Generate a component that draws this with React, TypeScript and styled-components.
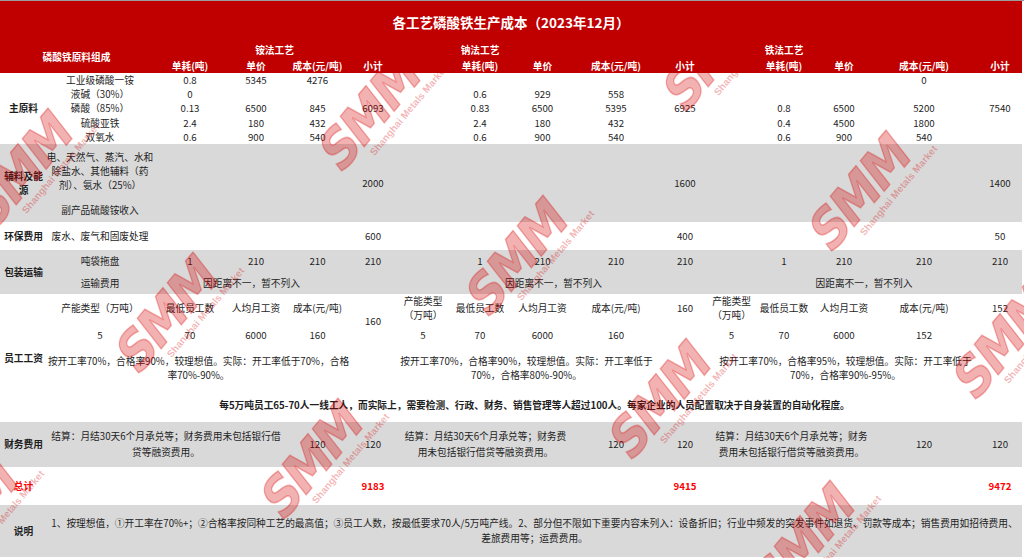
import React from "react";
import styled, { createGlobalStyle } from "styled-components";

const COLS =
  "47px 106px 74px 58px 65px 46px 54px 60px 65px 82px 56px 37px 68px 52px 108px 44px";

const GlobalStyle = createGlobalStyle`
  html, body {
    margin: 0;
    padding: 0;
    background: #fff;
  }
  body {
    font-family: "Noto Sans CJK SC", "Noto Sans", sans-serif;
    font-size: 9.7px;
    color: #1e1e1e;
  }
`;

const Sheet = styled.div`
  position: relative;
  width: 1024px;
  height: 558px;
  overflow: hidden;
  border-top: 1px solid #9a9a9a;
  box-sizing: border-box;
`;

const Section = styled.div<{ $rows: string; $tone?: "red" | "gray" | "white" }>`
  display: grid;
  width: 1022px;
  grid-template-columns: ${COLS};
  grid-template-rows: ${(p) => p.$rows};
  background: ${(p) =>
    p.$tone === "red" ? "#c00000" : p.$tone === "gray" ? "#d9d9d9" : "#ffffff"};
`;

const Header = styled(Section)`
  position: relative;
  z-index: 2;
  color: #fff;
  font-weight: 700;
`;

const Cell = styled.div<{ $col: string; $row: string; $bold?: boolean; $red?: boolean }>`
  grid-column: ${(p) => p.$col};
  grid-row: ${(p) => p.$row};
  display: flex;
  align-items: center;
  justify-content: center;
  text-align: center;
  white-space: nowrap;
  line-height: 14px;
  font-weight: ${(p) => (p.$bold ? 700 : "inherit")};
  color: ${(p) => (p.$red ? "#ff0000" : "inherit")};
`;

const Title = styled(Cell)`
  font-size: 13.5px;
  padding-top: 1px;
`;

const Para = styled(Cell)<{ $lh?: number }>`
  line-height: ${(p) => p.$lh ?? 14}px;
`;

const Mark = styled.div`
  position: absolute;
  z-index: 1;
  pointer-events: none;
  user-select: none;
  display: flex;
  flex-direction: column;
  align-items: flex-end;
  transform: translate(-50%, -50%) rotate(-50deg);
  color: rgba(215, 0, 0, 0.3);
  font-family: "DejaVu Sans", "Liberation Sans", sans-serif;
  font-weight: 700;
`;

const MarkLogo = styled.span`
  font-size: 52px;
  line-height: 46px;
  letter-spacing: -3px;
  transform: skewX(-12deg) scaleX(0.95);
  -webkit-text-stroke: 1.5px rgba(215, 0, 0, 0.3);
  margin-right: 14px;
`;

const MarkSub = styled.span`
  font-family: "Liberation Sans", sans-serif;
  font-size: 10px;
  line-height: 11px;
  margin-right: -4px;
`;

const materials = [
  { name: "工业级磷酸一铵", a: ["0.8", "5345", "4276"], n: ["", "", ""], f: ["", "", "0"] },
  { name: "液碱（30%）", a: ["0", "", ""], n: ["0.6", "929", "558"], f: ["", "", ""] },
  { name: "磷酸（85%）", a: ["0.13", "6500", "845"], n: ["0.83", "6500", "5395"], f: ["0.8", "6500", "5200"] },
  { name: "硫酸亚铁", a: ["2.4", "180", "432"], n: ["2.4", "180", "432"], f: ["0.4", "4500", "1800"] },
  { name: "双氧水", a: ["0.6", "900", "540"], n: ["0.6", "900", "540"], f: ["0.6", "900", "540"] },
];

// first column of each process block (name column)
const blocks = [
  { start: 2, key: "a" as const, sub: "6093", staff: "160", total: "9183" },
  { start: 7, key: "n" as const, sub: "6925", staff: "160", total: "9415" },
  { start: 12, key: "f" as const, sub: "7540", staff: "152", total: "9472" },
];

const marks = [
  [30, 168], [378, 110], [722, 50], [175, 312], [525, 255], [868, 190],
  [320, 458], [668, 398], [1012, 338], [812, 540], [-25, 515],
];

const c = (n: number) => String(n);

export default function App() {
  return (
    <>
      <GlobalStyle />
      <Sheet>
        <Header $tone="red" $rows="40px 18px 14px">
          <Title $col="1 / -1" $row="1">各工艺磷酸铁生产成本（2023年12月）</Title>
          <Cell $col="1 / 3" $row="2 / 4">磷酸铁原料组成</Cell>
          <Cell $col="3 / 7" $row="2">铵法工艺</Cell>
          <Cell $col="8" $row="2">钠法工艺</Cell>
          <Cell $col="13" $row="2">铁法工艺</Cell>
          {blocks.map((b) => (
            <React.Fragment key={b.start}>
              <Cell $col={c(b.start + 1)} $row="3">单耗(吨)</Cell>
              <Cell $col={c(b.start + 2)} $row="3">单价</Cell>
              <Cell $col={c(b.start + 3)} $row="3">成本(元/吨)</Cell>
              <Cell $col={c(b.start + 4)} $row="3">小计</Cell>
            </React.Fragment>
          ))}
        </Header>

        {/* 主原料 */}
        <Section $rows="repeat(5, 14.2px)">
          <Cell $col="1" $row="1 / 6" $bold>主原料</Cell>
          {materials.map((m, i) => (
            <React.Fragment key={m.name}>
              <Cell $col="2" $row={c(i + 1)}>{m.name}</Cell>
              {blocks.map((b) =>
                m[b.key].map((v, j) => (
                  <Cell key={b.key + j} $col={c(b.start + 1 + j)} $row={c(i + 1)}>
                    {v}
                  </Cell>
                ))
              )}
            </React.Fragment>
          ))}
          {blocks.map((b) => (
            <Cell key={b.start} $col={c(b.start + 4)} $row="3">{b.sub}</Cell>
          ))}
        </Section>

        {/* 辅料及能源 */}
        <Section $tone="gray" $rows="54px 24px">
          <Cell $col="1" $row="1 / 3" $bold>
            辅料及能
            <br />源
          </Cell>
          <Cell $col="2" $row="1">
            电、天然气、蒸汽、水和
            <br />
            除盐水、其他辅料（药
            <br />
            剂）、氨水（25%）
          </Cell>
          <Cell $col="2" $row="2">副产品硫酸铵收入</Cell>
          <Cell $col="6" $row="1 / 3">2000</Cell>
          <Cell $col="11" $row="1 / 3">1600</Cell>
          <Cell $col="16" $row="1 / 3">1400</Cell>
        </Section>

        {/* 环保费用 */}
        <Section $rows="28px">
          <Cell $col="1" $row="1" $bold>环保费用</Cell>
          <Cell $col="2" $row="1">废水、废气和固废处理</Cell>
          <Cell $col="6" $row="1">600</Cell>
          <Cell $col="11" $row="1">400</Cell>
          <Cell $col="16" $row="1">50</Cell>
        </Section>

        {/* 包装运输 */}
        <Section $tone="gray" $rows="22px 22px">
          <Cell $col="1" $row="1 / 3" $bold>包装运输</Cell>
          <Cell $col="2" $row="1">吨袋拖盘</Cell>
          <Cell $col="2" $row="2">运输费用</Cell>
          {blocks.map((b) => (
            <React.Fragment key={b.start}>
              <Cell $col={c(b.start + 1)} $row="1">1</Cell>
              <Cell $col={c(b.start + 2)} $row="1">210</Cell>
              <Cell $col={c(b.start + 3)} $row="1">210</Cell>
              <Cell $col={c(b.start + 4)} $row="1">210</Cell>
              <Cell $col={`${b.start + 1} / ${b.start + 4}`} $row="2">因距离不一，暂不列入</Cell>
            </React.Fragment>
          ))}
        </Section>

        {/* 员工工资 */}
        <Section $rows="28px 26px 40px 34px">
          <Cell $col="1" $row="1 / 5" $bold>员工工资</Cell>
          <Cell $col="2" $row="1">产能类型（万吨）</Cell>
          <Cell $col="7" $row="1">
            产能类型
            <br />（万吨）
          </Cell>
          <Cell $col="12" $row="1">
            产能类型
            <br />（万吨）
          </Cell>
          {blocks.map((b) => (
            <React.Fragment key={b.start}>
              <Cell $col={c(b.start + 1)} $row="1">最低员工数</Cell>
              <Cell $col={c(b.start + 2)} $row="1">人均月工资</Cell>
              <Cell $col={c(b.start + 3)} $row="1">成本(元/吨)</Cell>
              <Cell $col={c(b.start)} $row="2">5</Cell>
              <Cell $col={c(b.start + 1)} $row="2">70</Cell>
              <Cell $col={c(b.start + 2)} $row="2">6000</Cell>
              <Cell $col={c(b.start + 3)} $row="2">{b.staff}</Cell>
            </React.Fragment>
          ))}
          <Cell $col="6" $row="1 / 3">160</Cell>
          <Cell $col="11" $row="1">160</Cell>
          <Cell $col="16" $row="1">152</Cell>
          <Cell $col="2 / 6" $row="3">
            按开工率70%，合格率90%，较理想值。实际：开工率低于70%，合格
            <br />
            率70%-90%。
          </Cell>
          <Cell $col="7 / 11" $row="3">
            按开工率70%，合格率90%，较理想值。实际：开工率低于
            <br />
            70%，合格率80%-90%。
          </Cell>
          <Cell $col="12 / 16" $row="3">
            按开工率70%，合格率95%，较理想值。实际：开工率低于
            <br />
            70%，合格率90%-95%。
          </Cell>
          <Cell $col="2 / -1" $row="4" $bold>
            每5万吨员工65-70人一线工人，而实际上，需要检测、行政、财务、销售管理等人超过100人。每家企业的人员配置取决于自身装置的自动化程度。
          </Cell>
        </Section>

        {/* 财务费用 */}
        <Section $tone="gray" $rows="45px">
          <Cell $col="1" $row="1" $bold>财务费用</Cell>
          <Para $col="2 / 5" $row="1" $lh={16}>
            结算：月结30天6个月承兑等；财务费用未包括银行借
            <br />
            贷等融资费用。
          </Para>
          <Para $col="7 / 10" $row="1" $lh={16}>
            结算：月结30天6个月承兑等；财务费
            <br />
            用未包括银行借贷等融资费用。
          </Para>
          <Para $col="12 / 15" $row="1" $lh={16}>
            结算：月结30天6个月承兑等；财务
            <br />
            费用未包括银行借贷等融资费用。
          </Para>
          {blocks.map((b) => (
            <React.Fragment key={b.start}>
              <Cell $col={c(b.start + 3)} $row="1">120</Cell>
              <Cell $col={c(b.start + 4)} $row="1">120</Cell>
            </React.Fragment>
          ))}
        </Section>

        {/* 总计 */}
        <Section $rows="38px">
          <Cell $col="1" $row="1" $bold $red>总计</Cell>
          {blocks.map((b) => (
            <Cell key={b.start} $col={c(b.start + 4)} $row="1" $bold $red>
              {b.total}
            </Cell>
          ))}
        </Section>

        {/* 说明 */}
        <Section $tone="gray" $rows="52px">
          <Cell $col="1" $row="1" $bold>说明</Cell>
          <Para $col="2 / -1" $row="1" $lh={15}>
            1、按理想值，①开工率在70%+；②合格率按同种工艺的最高值；③员工人数，按最低要求70人/5万吨产线。2、部分但不限如下重要内容未列入：设备折旧；行业中频发的突发事件如退货、罚款等成本；销售费用如招待费用、
            <br />
            差旅费用等；运费费用。
          </Para>
        </Section>

        {marks.map(([x, y], i) => (
          <Mark key={i} aria-hidden style={{ left: x, top: y }}>
            <MarkLogo>SMM</MarkLogo>
            <MarkSub>Shanghai Metals Market</MarkSub>
          </Mark>
        ))}
      </Sheet>
    </>
  );
}
